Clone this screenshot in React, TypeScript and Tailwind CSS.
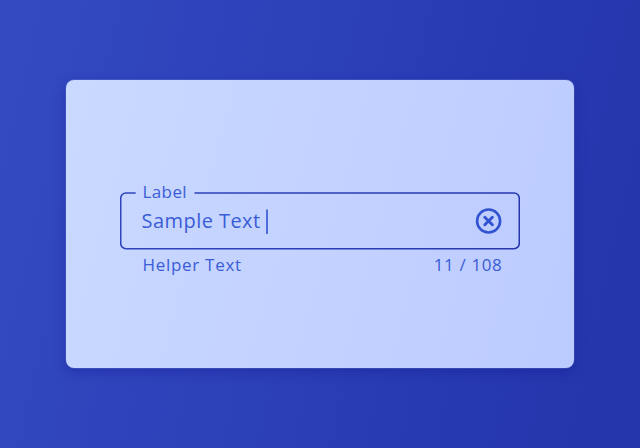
import React from 'react';

function ClearIcon() {
  return (
    <svg viewBox="0 0 28 28" className="h-7 w-7" fill="none" stroke="#3153d0">
      <circle cx="13.6" cy="14" r="11.5" strokeWidth="2.6" />
      <path d="M9.8 10.2l7.6 7.6M17.4 10.2l-7.6 7.6" strokeWidth="2.9" strokeLinecap="round" />
    </svg>
  );
}

function TextField() {
  return (
    <div className="w-[400px] text-[#3a5cd6]">
      <div className="relative h-[58px] w-full">
        {/* Notched outline, open where the label sits */}
        <svg viewBox="0 0 400 58" className="absolute inset-0 h-[58px] w-[400px]" fill="none">
          <defs>
            <linearGradient id="outline" x1="0" y1="0" x2="1" y2="0">
              <stop offset="0" stopColor="#2e43bd" />
              <stop offset="1" stopColor="#2637ae" />
            </linearGradient>
          </defs>
          <path
            d="M15.7 1H6A5.3 5.3 0 0 0 0.7 6.3V51.4A5.3 5.3 0 0 0 6 56.7H394A5.3 5.3 0 0 0 399.3 51.4V6.3A5.3 5.3 0 0 0 394 1H74.5"
            stroke="url(#outline)"
            strokeWidth="1.6"
          />
        </svg>
        <span className="absolute left-[22.5px] top-[-12px] text-[17px] leading-6 tracking-[0.4px]">Label</span>
        <div className="flex h-full items-center justify-between pl-[21.5px] pr-[17px]">
          <div className="flex items-center">
            <span className="-mt-px whitespace-nowrap text-[20px] leading-7 tracking-[0.45px]">Sample Text</span>
            <svg viewBox="0 0 4 26" className="ml-1 mt-px h-[26px] w-1">
              <path d="M2 0.5V25" stroke="#3153d0" strokeWidth="1.6" />
            </svg>
          </div>
          <ClearIcon />
        </div>
      </div>
      <div className="mt-[3px] flex justify-between pl-[22.5px] pr-[17.5px] text-[17px] leading-6">
        <span className="tracking-[0.7px]">Helper Text</span>
        <span className="tracking-[0.65px]">11 / 108</span>
      </div>
    </div>
  );
}

export default function App() {
  return (
    <main className="flex h-[448px] w-[640px] items-center justify-center overflow-hidden bg-[linear-gradient(103deg,#334bc0_0%,#2f44bc_28%,#2739b1_75%,#2434aa_100%)] font-['Open_Sans',sans-serif]">
      <section className="flex h-72 w-[508px] justify-center rounded-lg bg-[linear-gradient(105deg,#cad9ff_0%,#bccbff_100%)] pt-28 shadow-[0_0_0_0.4px_rgba(190,205,255,0.3),0_4px_12px_rgba(20,25,145,0.4)]">
        <TextField />
      </section>
    </main>
  );
}
